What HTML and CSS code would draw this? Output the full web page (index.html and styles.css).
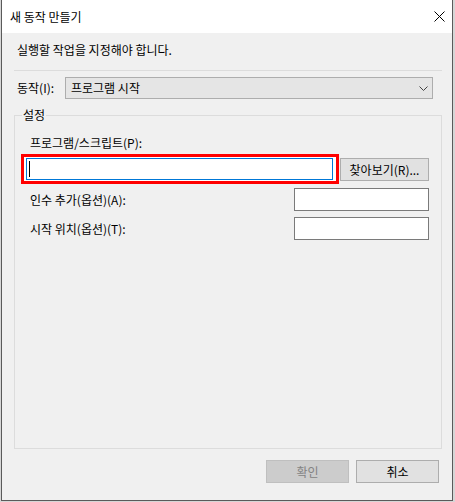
FILE: index.html
```html
<!DOCTYPE html>
<html>

<head>
    <title>새 동작 만들기</title>
    <meta charset="utf-8">
    <link rel="stylesheet" href="styles.css">
</head>

<body>
    <div class="window">
        <div class="titlebar">
            <span class="title">새 동작 만들기</span>
            <svg class="close" width="11" height="11" viewBox="0 0 11 11">
                <path d="M0.5 0.5 L10.5 10.5 M10.5 0.5 L0.5 10.5" stroke="#000" stroke-width="1" fill="none" />
            </svg>
        </div>
        <div class="content">
            <p class="intro">실행할 작업을 지정해야 합니다.</p>
            <div class="sep"></div>
            <div class="action-row">
                <span class="action-label">동작(I):</span>
                <div class="combo">
                    <span>프로그램 시작</span>
                    <svg width="9" height="5" viewBox="0 0 9 5">
                        <path d="M0.5 0.5 L4.5 4.5 L8.5 0.5" stroke="#444" stroke-width="1" fill="none" />
                    </svg>
                </div>
            </div>
            <fieldset class="group">
                <legend>설정</legend>
                <div class="field-label">프로그램/스크립트(P):</div>
                <div class="program-row">
                    <div class="highlight">
                        <div class="input focused"><span class="caret"></span></div>
                    </div>
                    <button class="btn browse">찾아보기(R)...</button>
                </div>
                <div class="field-row first">
                    <span>인수 추가(옵션)(A):</span>
                    <div class="input small"></div>
                </div>
                <div class="field-row">
                    <span>시작 위치(옵션)(T):</span>
                    <div class="input small"></div>
                </div>
            </fieldset>
            <div class="buttons">
                <button class="btn" disabled>확인</button>
                <button class="btn">취소</button>
            </div>
        </div>
    </div>
</body>

</html>
```

FILE: styles.css
```css
* {
    box-sizing: border-box;
    padding: 0;
    margin: 0;
}

body {
    background-color: #d6d6d6;
    font-family: "Noto Sans CJK KR", "Noto Sans", sans-serif;
    font-size: 12px;
    line-height: 16px;
    color: #000;
}

.window {
    display: flex;
    flex-direction: column;
    width: 452px;
    height: 501px;
    margin-left: 1px;
    background-color: #f0f0f0;
    border: 1px solid #5a5a5a;
    border-top: 0;
}

.titlebar {
    display: flex;
    justify-content: space-between;
    align-items: center;
    height: 33px;
    padding: 0 7px 0 8px;
    background-color: #fff;
}

.content {
    flex: 1;
    display: flex;
    flex-direction: column;
    padding: 9px 0 17px 0;
}

.intro {
    padding-left: 15px;
}

.sep {
    height: 1px;
    margin: 12px 10px 0 12px;
    background-color: #dcdcdc;
}

.action-row {
    display: flex;
    align-items: center;
    margin: 6px 19px 0 15px;
}

.action-label {
    width: 48px;
}

.combo {
    flex: 1;
    display: flex;
    justify-content: space-between;
    align-items: center;
    height: 22px;
    padding: 0 4px 0 5px;
    background-color: #e5e5e5;
    border: 1px solid #adadad;
}

.group {
    flex: 1;
    margin: 8px 10px 0 12px;
    padding: 12px 12px 0 6px;
    border: 1px solid #dcdcdc;
    min-width: 0;
}

.group legend {
    margin-left: 1px;
    padding: 0 1px;
}

.field-label {
    padding-left: 9px;
}

.program-row {
    display: flex;
    align-items: center;
    margin-top: 3px;
}

.highlight {
    display: flex;
    width: 318px;
    height: 30px;
    padding: 1px 3px 1px 2px;
    border: 3px solid #ff0000;
    background-color: #fff;
}

.input {
    background-color: #fff;
    border: 1px solid #7a7a7a;
    height: 23px;
}

.input.focused {
    flex: 1;
    height: 22px;
    border-color: #0078d7;
    padding: 2px 0 0 2px;
}

.caret {
    display: block;
    width: 1px;
    height: 16px;
    background-color: #000;
}

.btn {
    height: 23px;
    font-family: inherit;
    font-size: 12px;
    color: #000;
    background-color: #e1e1e1;
    border: 1px solid #adadad;
}

.btn:disabled {
    color: #838383;
    background-color: #cccccc;
    border-color: #bfbfbf;
}

.browse {
    width: 89px;
    margin-left: 1px;
}

.field-row {
    display: flex;
    justify-content: space-between;
    align-items: center;
    margin-top: 6px;
    padding-left: 9px;
}

.field-row.first {
    margin-top: 4px;
}

.input.small {
    width: 135px;
}

.buttons {
    display: flex;
    justify-content: flex-end;
    gap: 7px;
    margin-top: 11px;
    padding-right: 13px;
}

.buttons .btn {
    width: 83px;
}
```
